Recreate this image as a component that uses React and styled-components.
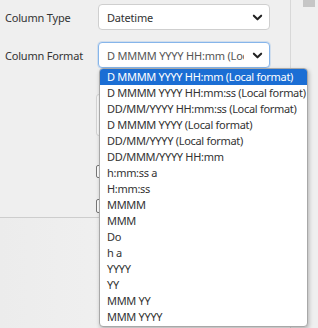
import React from "react";
import styled, { createGlobalStyle } from "styled-components";

const GlobalStyle = createGlobalStyle`
  html, body { margin: 0; padding: 0; }
  body {
    background: #efefef;
    font-family: "Noto Sans", "Open Sans", sans-serif;
    font-size: 11px;
    letter-spacing: -0.2px;
    color: #333;
  }
`;

const Page = styled.div`
  position: relative;
  display: flex;
  width: 318px;
  height: 328px;
  overflow: hidden;
`;

const Main = styled.div`
  width: 290px;
  border-right: 1px solid #d8d8d8;
  display: flex;
  flex-direction: column;
  background: #efefef;
`;

const Form = styled.div`
  height: 217px;
  padding: 4px 0 0 5px;
  box-sizing: border-box;
  display: flex;
  flex-direction: column;
  gap: 12px;
`;

const Row = styled.div`
  display: flex;
  align-items: center;
`;

const Label = styled.label`
  width: 93px;
  font-size: 11px;
  color: #333;
`;

const Select = styled.div`
  width: 172px;
  height: 26px;
  box-sizing: border-box;
  border: 1px solid ${(p) => (p.$focused ? "#86b5ea" : "#cfcfcf")};
  box-shadow: ${(p) => (p.$focused ? "0 0 0 1px rgba(120,170,230,0.25)" : "none")};
  border-radius: 4px;
  background: #fff;
  display: flex;
  align-items: center;
  padding: 0 6px 0 8px;
  gap: 8px;
`;

const SelectText = styled.span`
  flex: 1;
  white-space: nowrap;
  overflow: hidden;
  font-size: 11px;
  color: ${(p) => (p.$muted ? "#555" : "#333")};
`;

const Chevron = () => (
  <svg width="11" height="11" viewBox="0 0 12 12">
    <path d="M2 4 L6 8 L10 4" fill="none" stroke="#222" strokeWidth="2.2" strokeLinecap="round" strokeLinejoin="round" />
  </svg>
);

const Hidden = styled.div`
  margin-left: 91px;
  display: flex;
  flex-direction: column;
  align-items: flex-start;
`;

const TextBox = styled.div`
  width: 150px;
  height: 40px;
  margin-top: 14px;
  border: 1px solid #d4d4d4;
  border-radius: 3px;
  background: #fafafa;
`;

const Check = styled.div`
  width: 12px;
  height: ${(p) => p.$h}px;
  margin-top: ${(p) => p.$mt}px;
  border: 1px solid #777;
  border-radius: 2px;
  background: #fff;
`;

const Footer = styled.div`
  flex: 1;
  border-top: 1px solid #cdcdcd;
  background: linear-gradient(90deg, #ececec, #f6f6f6);
`;

const Side = styled.div`
  flex: 1;
  background: #efefef;
  display: flex;
  justify-content: flex-end;
  padding-right: 3px;
`;

const Thumb = styled.div`
  width: 12px;
  height: 7px;
  background: #c6c6c6;
`;

const List = styled.ul`
  position: absolute;
  left: 99px;
  top: 68px;
  width: 209px;
  margin: 0;
  padding: 0 0 1px;
  list-style: none;
  background: #fff;
  border: 1px solid #a8a8a8;
  border-radius: 4px;
  box-shadow: 1px 2px 4px rgba(0, 0, 0, 0.25);
  box-sizing: border-box;
  overflow: hidden;
`;

const Item = styled.li`
  height: 16px;
  line-height: 16px;
  padding-left: 7px;
  white-space: nowrap;
  font-size: 11px;
  letter-spacing: -0.3px;
  color: ${(p) => (p.$active ? "#fff" : "#333")};
  background: ${(p) => (p.$active ? "#1b6ed4" : "transparent")};
`;

const options = [
  "D MMMM YYYY HH:mm (Local format)",
  "D MMMM YYYY HH:mm:ss (Local format)",
  "DD/MM/YYYY HH:mm:ss (Local format)",
  "D MMMM YYYY (Local format)",
  "DD/MM/YYYY (Local format)",
  "DD/MMM/YYYY HH:mm",
  "h:mm:ss a",
  "H:mm:ss",
  "MMMM",
  "MMM",
  "Do",
  "h a",
  "YYYY",
  "YY",
  "MMM YY",
  "MMM YYYY",
];

export default function App() {
  return (
    <>
      <GlobalStyle />
      <Page>
        <Main>
          <Form>
            <Row>
              <Label>Column Type</Label>
              <Select>
                <SelectText>Datetime</SelectText>
                <Chevron />
              </Select>
            </Row>
            <Row>
              <Label>Column Format</Label>
              <Select $focused>
                <SelectText $muted>D MMMM YYYY HH:mm (Local format)</SelectText>
                <Chevron />
              </Select>
            </Row>
            <Hidden>
              <TextBox />
              <Check $h={11} $mt={29} />
              <Check $h={12} $mt={21} />
            </Hidden>
          </Form>
          <Footer />
        </Main>
        <Side>
          <Thumb />
        </Side>
        <List>
          {options.map((o, i) => (
            <Item key={o} $active={i === 0}>
              {o}
            </Item>
          ))}
        </List>
      </Page>
    </>
  );
}
